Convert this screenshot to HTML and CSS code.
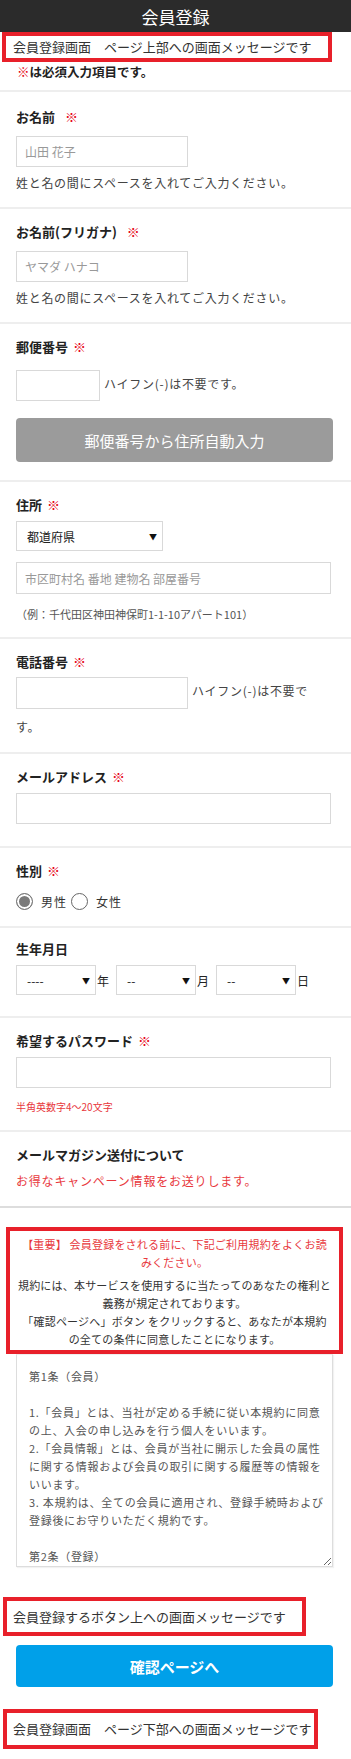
FILE: index.html
```html
<!DOCTYPE html>
<html lang="ja">

<head>

  <meta charset="utf-8">

  <title>会員登録</title>

  <link rel="stylesheet" href="styles.css">
</head>

<body>

  <header class="top-bar">
    <h1 class="top-bar-title">会員登録</h1>
  </header>

  <div class="notice notice-top">会員登録画面　ページ上部への画面メッセージです</div>

  <p class="required-note"><span class="mark">※</span>は必須入力項目です。</p>

  <form class="entry-form">

    <section class="field field-name field-first">
      <div class="field-label">お名前<span class="mark">※</span></div>
      <input class="text-input input-md" type="text" placeholder="山田 花子">
      <p class="field-help">姓と名の間にスペースを入れてご入力ください。</p>
    </section>

    <section class="field field-name">
      <div class="field-label">お名前(フリガナ)<span class="mark">※</span></div>
      <input class="text-input input-md" type="text" placeholder="ヤマダ ハナコ">
      <p class="field-help">姓と名の間にスペースを入れてご入力ください。</p>
    </section>

    <section class="field field-zip">
      <div class="field-label">郵便番号<span class="mark">※</span></div>
      <div class="inline-row row-zip">
        <input class="text-input input-sm" type="text">ハイフン(-)は不要です。
      </div>
      <button class="btn btn-gray" type="button">郵便番号から住所自動入力</button>
    </section>

    <section class="field">
      <div class="field-label">住所<span class="mark">※</span></div>
      <div class="select-wrap select-pref">
        <select class="select">
          <option>都道府県</option>
        </select>
      </div>
      <input class="text-input input-full input-address" type="text" placeholder="市区町村名 番地 建物名 部屋番号">
      <p class="field-note">（例：千代田区神田神保町1-1-10アパート101）</p>
    </section>

    <section class="field field-tel">
      <div class="field-label">電話番号<span class="mark">※</span></div>
      <div class="inline-row row-tel">
        <input class="text-input input-md" type="tel">ハイフン(-)は不要です。
      </div>
    </section>

    <section class="field">
      <div class="field-label">メールアドレス<span class="mark">※</span></div>
      <input class="text-input input-full input-last" type="email">
    </section>

    <section class="field field-gender">
      <div class="field-label">性別<span class="mark">※</span></div>
      <div class="radio-row">
        <input class="radio" type="radio" name="sex" checked><span class="radio-text">男性</span>
        <input class="radio" type="radio" name="sex"><span class="radio-text">女性</span>
      </div>
    </section>

    <section class="field field-birth">
      <div class="field-label">生年月日</div>
      <div class="date-row">
        <div class="select-wrap select-date"><select class="select"><option>----</option></select></div>
        <span class="date-unit">年</span>
        <div class="select-wrap select-date"><select class="select"><option>--</option></select></div>
        <span class="date-unit">月</span>
        <div class="select-wrap select-date"><select class="select"><option>--</option></select></div>
        <span class="date-unit">日</span>
      </div>
    </section>

    <section class="field">
      <div class="field-label">希望するパスワード<span class="mark">※</span></div>
      <input class="text-input input-full" type="password">
      <p class="field-hint">半角英数字4〜20文字</p>
    </section>

    <section class="field field-mag">
      <div class="field-label">メールマガジン送付について</div>
      <p class="mag-text">お得なキャンペーン情報をお送りします。</p>
    </section>

    <div class="terms-notice">
      <p class="terms-warn">【重要】 会員登録をされる前に、下記ご利用規約をよくお読<br>みください。</p>
      <p class="terms-desc">規約には、本サービスを使用するに当たってのあなたの権利と<br>義務が規定されております。<br>「確認ページへ」ボタン をクリックすると、あなたが本規約<br>の全ての条件に同意したことになります。</p>
    </div>

    <textarea class="terms-text" readonly>第1条（会員）

1.「会員」とは、当社が定める手続に従い本規約に同意
の上、入会の申し込みを行う個人をいいます。
2.「会員情報」とは、会員が当社に開示した会員の属性
に関する情報および会員の取引に関する履歴等の情報を
いいます。
3. 本規約は、全ての会員に適用され、登録手続時および
登録後にお守りいただく規約です。

第2条（登録）

1. 会員として登録を希望する方は、本規約に同意の上、
当社の定める方法により登録を申請するものとします。</textarea>

    <div class="notice notice-submit">会員登録するボタン上への画面メッセージです</div>

    <button class="btn btn-blue" type="submit">確認ページへ</button>

  </form>

  <div class="notice notice-bottom">会員登録画面　ページ下部への画面メッセージです</div>

</body>

</html>
```

FILE: styles.css
```css
* {
  box-sizing: border-box;
}

body {
  margin: 0;
  font-family: "Noto Sans CJK JP", "Noto Sans", sans-serif;
  color: #222;
  background: #fff;
}

.top-bar {
  height: 32px;
  background: #2b2b2b;
  display: flex;
  align-items: center;
  justify-content: center;
}

.top-bar-title {
  margin: 0;
  color: #fff;
  font-size: 17px;
  font-weight: normal;
  line-height: 1;
}

/* red message boxes */
.notice {
  border: 4px solid #e8202a;
  background: #fff;
  font-size: 13px;
  color: #333;
  white-space: nowrap;
}

.notice-top {
  width: 330px;
  margin-left: 2px;
  padding-left: 7px;
  line-height: 22px;
}

.notice-submit {
  width: 303px;
  margin: 30px 0 0 3px;
  padding-left: 6px;
  line-height: 31px;
}

.notice-bottom {
  width: 315px;
  margin: 22px 0 9px 3px;
  padding-left: 6px;
  line-height: 32px;
}

.required-note {
  margin: 1px 0 9px;
  padding-left: 17px;
  font-size: 12.5px;
  font-weight: bold;
  line-height: 18px;
}

.mark {
  color: #e60012;
}

.entry-form {
  margin: 0;
}

.field {
  border-top: 2px solid #eee;
  padding: 14px 18px 15px 16px;
}

.field-label {
  font-size: 13px;
  font-weight: bold;
  line-height: 18px;
  margin-bottom: 7px;
}

.field-label .mark {
  margin-left: 5px;
}

.field-first {
  padding-top: 16px;
}

.field-name .field-label {
  margin-bottom: 10px;
}

.field-name .field-label .mark {
  margin-left: 10px;
}

.text-input {
  display: block;
  height: 31px;
  margin: 0;
  padding: 0 8px;
  border: 1px solid #d9d9d9;
  border-radius: 0;
  background: #fff;
  font-family: inherit;
  font-size: 12px;
  color: #333;
}

.text-input::placeholder {
  color: #999;
}

.input-md {
  width: 172px;
}

.input-sm {
  width: 84px;
}

.input-full {
  width: 315px;
}

.input-address {
  height: 32px;
  margin-top: 11px;
}

.input-last {
  margin-bottom: 7px;
}

.field-help {
  margin: 7px 0 0;
  font-size: 12px;
  letter-spacing: 0.7px;
  line-height: 18px;
  color: #444;
}

.field-note {
  margin: 12px 0 0;
  font-size: 11px;
  line-height: 16px;
  color: #555;
}

.field-hint {
  margin: 12px 0 1px;
  font-size: 10px;
  line-height: 14px;
  color: #e8383d;
}

.inline-row {
  font-size: 12px;
  letter-spacing: 0.7px;
  color: #444;
}

.inline-row .text-input {
  display: inline-block;
  vertical-align: middle;
  margin-right: 4px;
}

.row-zip {
  line-height: 42px;
}

.row-tel {
  width: 305px;
  line-height: 36px;
}

.field-tel {
  padding-bottom: 7px;
}

.field-tel .field-label {
  margin-bottom: 2px;
}

.row-tel .text-input {
  height: 32px;
}

.btn {
  display: block;
  width: 317px;
  border: 0;
  border-radius: 4px;
  color: #fff;
  font-family: inherit;
  font-size: 15px;
}

.btn-gray {
  height: 44px;
  margin: 13px 0 3px;
  background: #9b9b9b;
}

.btn-blue {
  height: 42px;
  margin: 9px 0 0 16px;
  background: #00a0e9;
  font-weight: bold;
}

/* selects */
.select-wrap {
  position: relative;
  display: inline-block;
}

.select-wrap::after {
  content: "▼";
  position: absolute;
  right: 6px;
  top: 50%;
  transform: translateY(-50%);
  font-size: 8px;
  color: #111;
  pointer-events: none;
}

.select {
  appearance: none;
  -webkit-appearance: none;
  display: block;
  width: 100%;
  height: 30px;
  margin: 0;
  padding: 0 0 0 10px;
  border: 1px solid #d9d9d9;
  border-radius: 0;
  background: #fff;
  font-family: inherit;
  font-size: 12px;
  color: #222;
}

.select-pref {
  display: block;
  width: 147px;
}

.select-date {
  width: 80px;
}

.date-row {
  display: flex;
  align-items: center;
  height: 30px;
  font-size: 12px;
}

.date-unit {
  margin: 0 7px 0 1px;
}

.field-birth {
  padding-top: 12px;
  padding-bottom: 21px;
}

/* gender */
.radio-row {
  display: flex;
  align-items: center;
  height: 28px;
}

.radio {
  appearance: none;
  -webkit-appearance: none;
  width: 17px;
  height: 17px;
  margin: 0;
  border: 1px solid #666;
  border-radius: 50%;
  background: #fff;
}

.radio:checked {
  border-color: #777;
  background: #7a7a7a;
  box-shadow: inset 0 0 0 2px #fff;
}

.radio-text {
  margin: 0 4px 0 8px;
  font-size: 12px;
  letter-spacing: 1px;
  color: #333;
}

.field-gender {
  padding-bottom: 11px;
}

.mag-text {
  margin: 0;
  font-size: 12px;
  letter-spacing: 0.8px;
  line-height: 20px;
  color: #e8383d;
}

.field-mag {
  border-bottom: 2px solid #ddd;
}

/* terms */
.terms-notice {
  margin: 19px 8px 0 6px;
  padding: 4px 4px 2px;
  border: 4px solid #e8202a;
  text-align: center;
  font-size: 11px;
  line-height: 18px;
  letter-spacing: 0.2px;
  white-space: nowrap;
}

.terms-notice p {
  margin: 0;
}

.terms-warn {
  color: #e8383d;
  margin-bottom: 5px !important;
}

.terms-desc {
  color: #333;
}

.terms-text {
  display: block;
  width: 317px;
  height: 213px;
  margin: 0 0 0 16px;
  padding: 12px 4px 0 12px;
  border: 1px solid #ddd;
  border-top-color: #eee;
  font-family: inherit;
  font-size: 11px;
  letter-spacing: 0.7px;
  line-height: 18px;
  color: #555;
  white-space: pre;
  overflow: hidden;
  resize: vertical;
  box-shadow: 1px 1px 1px rgba(0, 0, 0, 0.05);
}
```
